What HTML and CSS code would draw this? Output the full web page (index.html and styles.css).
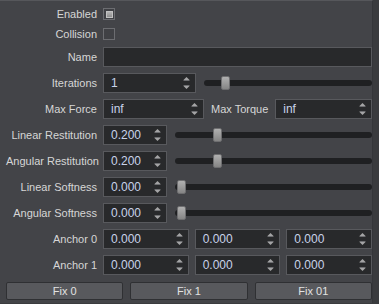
FILE: index.html
```html
<!DOCTYPE html>
<html lang="en">
<head>
  <meta charset="UTF-8" />
  <title>Joint Properties</title>
  <link rel="stylesheet" href="styles.css">
</head>
<body>
  <div class="panel">
    <div class="row row-check">
      <span class="label">Enabled</span>
      <span class="check checked"><span class="mark"></span></span>
    </div>
    <div class="row row-check">
      <span class="label">Collision</span>
      <span class="check"></span>
    </div>
    <div class="row">
      <span class="label">Name</span>
      <div class="field name"></div>
    </div>
    <div class="row">
      <span class="label">Iterations</span>
      <div class="field spin w-iter"><span class="val">1</span><span class="arrows"></span></div>
      <div class="slider"><span class="handle" style="left:17px"></span></div>
    </div>
    <div class="row">
      <span class="label">Max Force</span>
      <div class="field spin w-force"><span class="val">inf</span><span class="arrows"></span></div>
      <span class="label inline">Max Torque</span>
      <div class="field spin grow"><span class="val">inf</span><span class="arrows"></span></div>
    </div>
    <div class="row">
      <span class="label">Linear Restitution</span>
      <div class="field spin w-num"><span class="val">0.200</span><span class="arrows"></span></div>
      <div class="slider wide"><span class="handle" style="left:38px"></span></div>
    </div>
    <div class="row">
      <span class="label">Angular Restitution</span>
      <div class="field spin w-num"><span class="val">0.200</span><span class="arrows"></span></div>
      <div class="slider wide"><span class="handle" style="left:38px"></span></div>
    </div>
    <div class="row">
      <span class="label">Linear Softness</span>
      <div class="field spin w-num"><span class="val">0.000</span><span class="arrows"></span></div>
      <div class="slider wide"><span class="handle" style="left:2px"></span></div>
    </div>
    <div class="row">
      <span class="label">Angular Softness</span>
      <div class="field spin w-num"><span class="val">0.000</span><span class="arrows"></span></div>
      <div class="slider wide"><span class="handle" style="left:2px"></span></div>
    </div>
    <div class="row">
      <span class="label">Anchor 0</span>
      <div class="triple">
        <div class="field spin"><span class="val">0.000</span><span class="arrows"></span></div>
        <div class="field spin"><span class="val">0.000</span><span class="arrows"></span></div>
        <div class="field spin"><span class="val">0.000</span><span class="arrows"></span></div>
      </div>
    </div>
    <div class="row">
      <span class="label">Anchor 1</span>
      <div class="triple">
        <div class="field spin"><span class="val">0.000</span><span class="arrows"></span></div>
        <div class="field spin"><span class="val">0.000</span><span class="arrows"></span></div>
        <div class="field spin"><span class="val">0.000</span><span class="arrows"></span></div>
      </div>
    </div>
    <div class="buttons">
      <button class="btn">Fix 0</button>
      <button class="btn">Fix 1</button>
      <button class="btn">Fix 01</button>
    </div>
  </div>
  <svg width="0" height="0" style="position:absolute">
    <defs>
      <symbol id="arr" viewBox="0 0 7 14">
        <path d="M3.5 1 L6.5 4 L0.5 4 Z" fill="#a4a4a6"/>
        <rect x="0.5" y="4" width="6" height="1" fill="#6e6f72"/>
        <rect x="0.5" y="9" width="6" height="1" fill="#6e6f72"/>
        <path d="M0.5 10 L6.5 10 L3.5 13 Z" fill="#a4a4a6"/>
      </symbol>
    </defs>
  </svg>
  <script>
    document.querySelectorAll('.arrows').forEach(a => {
      a.innerHTML = '<svg width="7" height="14"><use href="#arr"/></svg>';
    });
  </script>
</body>
</html>
```

FILE: styles.css
```css
:root {
  --bg: #434448;
  --field: #28292b;
  --border: #58595d;
  --label: #d6d6d6;
  --value: #c9d3ea;
}
html, body {
  margin: 0;
  padding: 0;
  background: #3a3b3e;
}
body {
  font-family: "Liberation Sans", Arial, sans-serif;
  font-size: 11px;
  color: var(--label);
}
.panel {
  width: 373px;
  height: 303px;
  box-sizing: border-box;
  background: var(--bg);
  border-top: 1px solid #56575b;
  border-right: 1px solid #35363a;
  padding: 6px 0 0 6px;
  display: flex;
  flex-direction: column;
  gap: 6px;
}
.row {
  display: flex;
  align-items: center;
  height: 20px;
  gap: 7px;
}
.row-check {
  height: 14px;
}
.label {
  width: 91px;
  flex: none;
  text-align: right;
  white-space: nowrap;
  margin-right: -1px;
}
.label.inline {
  width: auto;
  margin-right: 0;
}
.check {
  width: 10px;
  height: 10px;
  border: 1px solid #6c6d71;
  background: #404145;
  display: flex;
  align-items: center;
  justify-content: center;
}
.check .mark {
  width: 7px;
  height: 7px;
  background: linear-gradient(#b4b4b4, #8e8e8e);
  border: 1px solid #c2c2c2;
  box-sizing: border-box;
}
.field {
  height: 20px;
  box-sizing: border-box;
  background: var(--field);
  border: 1px solid var(--border);
  display: flex;
  align-items: center;
  color: var(--value);
  font-size: 12px;
}
.name {
  flex: 1;
}
.spin .val {
  flex: 1;
  padding-left: 7px;
}
.spin .arrows {
  width: 7px;
  height: 14px;
  margin-right: 5px;
  display: flex;
}
.w-iter { width: 93px; flex: none; }
.w-force { width: 101px; flex: none; }
.w-num { width: 64px; flex: none; }
.grow { flex: 1; }
.slider {
  position: relative;
  flex: 1;
  height: 6px;
  background: #1f2022;
  border-radius: 3px;
  margin-left: 1px;
}
.handle {
  position: absolute;
  top: -4px;
  width: 9px;
  height: 14px;
  box-sizing: border-box;
  border-radius: 2px;
  border: 1px solid #6e6e70;
  background: linear-gradient(#b0b0b0, #858585);
}
.triple {
  flex: 1;
  display: flex;
  gap: 6px;
}
.triple .field {
  flex: 1;
}
.buttons {
  display: flex;
  gap: 7px;
  margin-top: 1px;
}
.btn {
  flex: 1;
  height: 18px;
  padding: 0;
  font-family: inherit;
  font-size: 11px;
  color: #e2e2e2;
  background: #58595d;
  border: 1px solid #2f3033;
  border-radius: 2px;
}
```
